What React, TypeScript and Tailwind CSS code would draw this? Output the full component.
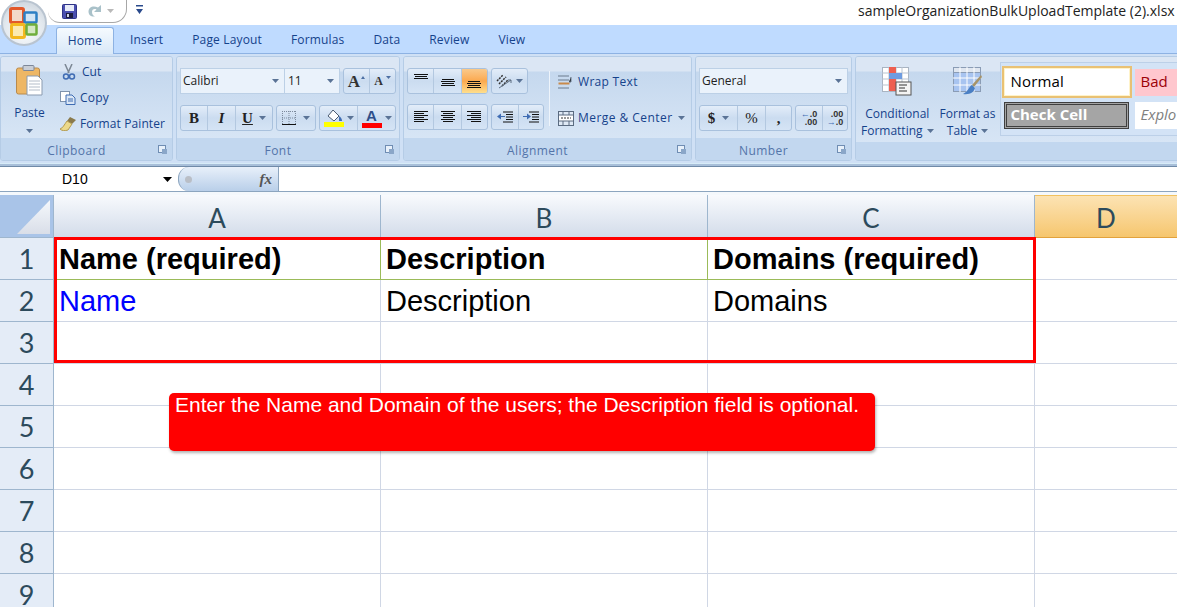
import type { ReactNode } from "react";

const ribbonFont = "font-['Open_Sans',sans-serif]";
const groupBtn =
  "flex rounded-[3px] border border-[#a9c1dd] bg-linear-to-b from-[#e3edf9] via-[#cbdcf0] to-[#d5e4f5] h-[26px]";

function Caret({ className = "" }: { className?: string }) {
  return (
    <svg width="7" height="4" viewBox="0 0 7 4" className={className}>
      <path d="M0 0h7L3.5 4z" fill="#5a7396" />
    </svg>
  );
}

function Lines({ rows }: { rows: [number, number, number][] }) {
  return (
    <svg width="16" height="14" viewBox="0 0 16 14">
      {rows.map(([x, y, w], i) => (
        <rect key={i} x={x} y={y} width={w} height="1" fill="#111" />
      ))}
    </svg>
  );
}

function Launcher() {
  return (
    <svg width="9" height="9" viewBox="0 0 9 9" className="absolute right-[5px] bottom-[6px]">
      <rect x="0.5" y="0.5" width="7" height="7" fill="#e7f0fa" stroke="#6f8db3" />
      <rect x="4" y="4" width="5" height="5" fill="#8aa6c8" />
    </svg>
  );
}

function Group({
  width,
  label,
  launcher = true,
  children,
}: {
  width: string;
  label?: string;
  launcher?: boolean;
  children: ReactNode;
}) {
  return (
    <div
      className={`${width} shrink-0 h-[105px] flex flex-col rounded-[3px] border border-[#b5cce6] overflow-hidden`}
    >
      <div className="h-[85px] flex bg-[linear-gradient(#dbe6f4_0,#dbe6f4_14px,#c5d8ee_15px,#d7e5f5_100%)]">
        {children}
      </div>
      <div className="relative flex-1 bg-[#c2d7ef] flex items-center justify-center pt-[4px] pr-[20px] text-[12px] tracking-[0.45px] text-[#5374a9]">
        {label}
        {launcher && <Launcher />}
      </div>
    </div>
  );
}

function Seg({
  w,
  last,
  active,
  children,
}: {
  w: string;
  last?: boolean;
  active?: boolean;
  children: ReactNode;
}) {
  return (
    <div
      className={`${w} flex items-center justify-center gap-[3px] ${last ? "" : "border-r border-[#b3c8e0]"} ${
        active ? "bg-linear-to-b from-[#f9c98a] via-[#fba94e] to-[#fedf8c]" : ""
      }`}
    >
      {children}
    </div>
  );
}

function OfficeOrb() {
  return (
    <div className="absolute left-[1px] top-0 w-[46px] h-[46px] rounded-full border-2 border-[#b9c4d0] bg-[radial-gradient(circle_at_50%_70%,#fafcfd_0,#e2e8ee_55%,#c3ccd6_100%)] flex items-center justify-center">
      <svg width="30" height="32" viewBox="0 0 30 32">
        <rect x="1.500" y="1.500" width="13" height="14" rx="1.500" fill="#f3d9c8" stroke="#e2582a" strokeWidth="3" />
        <rect x="15.500" y="5.500" width="12" height="10" rx="1" fill="#d2e5f5" stroke="#2c7fc4" strokeWidth="2.500" />
        <rect x="2.500" y="17.500" width="13" height="13" rx="1.500" fill="#fbeab0" stroke="#f3b81f" strokeWidth="3" />
        <rect x="17.500" y="17.500" width="10" height="10" rx="1" fill="#d5e8c3" stroke="#6fae3c" strokeWidth="2.500" />
      </svg>
    </div>
  );
}

function QuickAccess() {
  return (
    <div className="ml-[48px] w-[79px] h-[23px] rounded-br-[14px] rounded-bl-[12px] border-r border-b border-[#a7a7a7] bg-white flex items-center pl-[14px]">
      <svg width="15" height="15" viewBox="0 0 15 15">
        <rect width="14" height="14" x="0.5" y="0.5" rx="1" fill="#4a4fb0" stroke="#2f3487" />
        <rect x="3" y="1" width="9" height="6" fill="#e8ecf8" />
        <rect x="4" y="9" width="7" height="5" fill="#1d1d3f" />
        <rect x="5" y="10" width="2" height="3" fill="#cfd3e6" />
      </svg>
      <svg width="14" height="14" viewBox="0 0 14 14" className="ml-[11px]">
        <path
          d="M13 1v7H6l2.500-2.500C6 4.500 4 5.500 4 8c0 2 1 3.500 3 4.500C3 13 .500 11 .500 7.500.500 3 5.500 1 10 3.500z"
          fill="#a9c1c9"
        />
      </svg>
      <svg width="7" height="4" viewBox="0 0 7 4" className="ml-[5px]">
        <path d="M0 0h7L3.500 4z" fill="#b9b9b9" />
      </svg>
    </div>
  );
}

function ClipboardGroup() {
  return (
    <Group width="w-[173px]" label="Clipboard">
      <div className="w-[57px] flex flex-col items-center pt-[8px]">
        <svg width="27" height="31" viewBox="0 0 27 31">
          <rect x="0.500" y="3" width="23" height="26" rx="2" fill="#eeb765" stroke="#b98a4c" />
          <rect x="7" y="0.500" width="11" height="5" rx="1" fill="#c9ced6" stroke="#7c8799" />
          <path d="M11 11h11l4 4v15H11z" fill="#fff" stroke="#8b9bb0" />
          <path d="M13 16h11M13 19h11M13 22h11M13 25h11" stroke="#b4bdc9" />
        </svg>
        <span className="mt-[9px] text-[12px] leading-[16px] text-[#15428b]">Paste</span>
        <Caret className="mt-[8px]" />
      </div>
      <div className="flex flex-col pt-[5px] gap-[6px] pl-[2px] text-[12px] text-[#15428b]">
        <div className="flex items-center h-[20px]">
          <svg width="14" height="16" viewBox="0 0 14 16" className="ml-[2px]">
            <path d="M3 0l4 9M10 0 6 9" stroke="#7c8794" strokeWidth="1.500" />
            <circle cx="4" cy="12.500" r="2.500" fill="none" stroke="#3f6cb3" strokeWidth="1.500" />
            <circle cx="10" cy="12.500" r="2.500" fill="none" stroke="#3f6cb3" strokeWidth="1.500" />
          </svg>
          <span className="ml-[6px]">Cut</span>
        </div>
        <div className="flex items-center h-[20px]">
          <svg width="16" height="14" viewBox="0 0 16 14">
            <rect x="0.500" y="0.500" width="9" height="10" fill="#fff" stroke="#7f93ad" />
            <path d="M6 4h6l3 3v6.500H6z" fill="#dbe7f5" stroke="#3f6cb3" />
            <path d="M8 8h5M8 10h5" stroke="#3f6cb3" />
          </svg>
          <span className="ml-[4px] tracking-[0.2px]">Copy</span>
        </div>
        <div className="flex items-center h-[20px]">
          <svg width="16" height="14" viewBox="0 0 16 14">
            <path d="M10 0l6 3-4 4-5-3z" fill="#8a7a4c" />
            <path d="M7 4l5 3-4 6c-3 1-6 1-8-1 3-1 4-4 7-8z" fill="#ecd98a" stroke="#b39b50" />
          </svg>
          <span className="ml-[4px] tracking-[0.1px]">Format Painter</span>
        </div>
      </div>
    </Group>
  );
}

function FontGroup() {
  return (
    <Group width="w-[224px]" label="Font">
      <div className="pl-[3px] pt-[11px] flex flex-col gap-[11px]">
        <div className="flex h-[26px]">
          <div className="w-[105px] h-[26px] bg-[#eaf2fb] border border-[#bcd0e6] flex items-center justify-between pl-[2px] pr-[5px] text-[12px] text-[#222]">
            Calibri
            <Caret />
          </div>
          <div className="w-[55px] h-[26px] bg-[#eaf2fb] border border-[#bcd0e6] border-l-0 flex items-center justify-between pl-[3px] pr-[5px] text-[12px] text-[#222]">
            11
            <Caret />
          </div>
          <div className={`${groupBtn} ml-[3px] w-[53px]`}>
            <Seg w="w-[26px]">
              <span className="font-['Liberation_Serif',serif] font-bold text-[17px] text-[#333] leading-none">A</span>
              <svg width="4" height="3" viewBox="0 0 4 3" className="-mt-[8px] -ml-[2px]">
                <path d="M0 3h4L2 0z" fill="#4d6fa3" />
              </svg>
            </Seg>
            <Seg w="w-[25px]" last>
              <span className="font-['Liberation_Serif',serif] font-bold text-[12px] text-[#333] leading-none">A</span>
              <svg width="5" height="3" viewBox="0 0 5 3" className="-mt-[8px]">
                <path d="M0 0h5L2.500 3z" fill="#4d6fa3" />
              </svg>
            </Seg>
          </div>
        </div>
        <div className="flex gap-[3px]">
          <div className={`${groupBtn} w-[93px] font-['Liberation_Serif',serif] font-bold text-[15px] text-[#222]`}>
            <Seg w="w-[27px]">B</Seg>
            <Seg w="w-[28px]"><i className="font-bold">I</i></Seg>
            <Seg w="w-[36px]" last>
              <u>U</u>
              <Caret className="ml-[3px]" />
            </Seg>
          </div>
          <div className={`${groupBtn} w-[40px]`}>
            <Seg w="w-full" last>
              <svg width="14" height="14" viewBox="0 0 14 14">
                <path d="M.500 0v13M7 0v13M13.500 0v13M0 .500h14M0 7h14" stroke="#7c8a9c" strokeDasharray="1 1" />
                <path d="M0 13.500h14" stroke="#111" />
              </svg>
              <Caret className="ml-[4px]" />
            </Seg>
          </div>
          <div className={`${groupBtn} w-[77px]`}>
            <Seg w="w-[38px]">
              <svg width="20" height="18" viewBox="0 0 20 18">
                <path d="M9 1l6 6-5 5-6-5z" fill="#fff" stroke="#4a5b70" />
                <path d="M15 7c2 1 3 3 3 5h-3z" fill="#3f6cb3" />
                <rect y="13" width="20" height="5" fill="#ffff00" />
              </svg>
              <Caret />
            </Seg>
            <Seg w="w-[37px]" last>
              <div className="flex flex-col items-center">
                <span className="font-['Liberation_Sans',sans-serif] font-bold text-[15px] leading-[14px] text-[#2f4f8a]">A</span>
                <div className="w-[20px] h-[5px] bg-[#ff0000]" />
              </div>
              <Caret />
            </Seg>
          </div>
        </div>
      </div>
    </Group>
  );
}

function AlignmentGroup() {
  const top: [number, number, number][] = [[1, 0, 14], [2, 2, 12], [1, 4, 14]];
  const mid: [number, number, number][] = [[2, 5, 12], [1, 7, 14], [2, 9, 12], [1, 11, 14]];
  const bot: [number, number, number][] = [[2, 7, 12], [1, 9, 14], [2, 11, 12], [1, 13, 14]];
  const left: [number, number, number][] = [[1, 1, 14], [1, 3, 10], [1, 5, 14], [1, 7, 10], [1, 9, 14], [1, 11, 10]];
  const center: [number, number, number][] = [[1, 1, 14], [3, 3, 10], [1, 5, 14], [3, 7, 10], [1, 9, 14], [3, 11, 10]];
  const right: [number, number, number][] = [[1, 1, 14], [5, 3, 10], [1, 5, 14], [5, 7, 10], [1, 9, 14], [5, 11, 10]];
  return (
    <Group width="w-[289px]" label="Alignment">
      <div className="pl-[3px] pt-[11px] flex flex-col gap-[10px]">
        <div className="flex gap-[3px]">
          <div className={`${groupBtn} w-[81px] overflow-hidden`}>
            <Seg w="w-[27px]"><Lines rows={top} /></Seg>
            <Seg w="w-[28px]"><Lines rows={mid} /></Seg>
            <Seg w="w-[26px]" last active><Lines rows={bot} /></Seg>
          </div>
          <div className={`${groupBtn} w-[37px]`}>
            <Seg w="w-full" last>
              <svg width="17" height="15" viewBox="0 0 17 15">
                <path d="M1 7l6-6M3 10l7-7M6 12l6-6" stroke="#333" strokeWidth="1.500" strokeDasharray="2 1" />
                <path d="M3 14 15 6M15 6h-3M15 6v3" stroke="#5d6d80" fill="none" />
              </svg>
              <Caret />
            </Seg>
          </div>
        </div>
        <div className="flex gap-[3px]">
          <div className={`${groupBtn} w-[81px]`}>
            <Seg w="w-[27px]"><Lines rows={left} /></Seg>
            <Seg w="w-[28px]"><Lines rows={center} /></Seg>
            <Seg w="w-[26px]" last><Lines rows={right} /></Seg>
          </div>
          <div className={`${groupBtn} w-[53px]`}>
            <Seg w="w-[27px]">
              <svg width="16" height="14" viewBox="0 0 16 14">
                <path d="M6 2h10M9 4.500h7M9 7h7M9 9.500h7M6 12h10" stroke="#111" />
                <path d="M0 6.500 4 3.500v6z" fill="#3f6cb3" />
                <path d="M4 6.500h4" stroke="#3f6cb3" />
              </svg>
            </Seg>
            <Seg w="w-[24px]" last>
              <svg width="16" height="14" viewBox="0 0 16 14">
                <path d="M6 2h10M9 4.500h7M9 7h7M9 9.500h7M6 12h10" stroke="#111" />
                <path d="M8 6.500 4 3.500v6z" fill="#3f6cb3" />
                <path d="M0 6.500h4" stroke="#3f6cb3" />
              </svg>
            </Seg>
          </div>
        </div>
      </div>
      <div className="ml-[5px] mt-[14px] w-[1px] h-[55px] bg-[#eef4fb]" />
      <div className="pl-[8px] pt-[15px] flex flex-col gap-[16px] text-[12px] text-[#15428b]">
        <div className="flex items-center h-[20px]">
          <svg width="16" height="15" viewBox="0 0 16 15">
            <path d="M0 1h11M0 5h11" stroke="#6b7a8d" />
            <rect x="0.500" y="7.500" width="11" height="2" fill="#c98a4b" />
            <path d="M0 13h11M13 2v5h-2" stroke="#6b7a8d" />
          </svg>
          <span className="ml-[4px] tracking-[0.3px]">Wrap Text</span>
        </div>
        <div className="flex items-center h-[20px]">
          <svg width="16" height="15" viewBox="0 0 16 15">
            <rect x="0.500" y="0.500" width="15" height="14" fill="#dfe9f5" stroke="#5a6b80" />
            <rect x="1" y="4" width="14" height="6" fill="#fff" />
            <path d="M0 4h16M0 10h16M5 0v4M11 0v4M5 10v5M11 10v5" stroke="#5a6b80" />
            <path d="M3 7h10" stroke="#333" strokeDasharray="2 1" />
          </svg>
          <span className="ml-[4px] tracking-[0.45px]">Merge &amp; Center</span>
          <Caret className="ml-[5px]" />
        </div>
      </div>
    </Group>
  );
}

function NumberGroup() {
  return (
    <Group width="w-[157px]" label="Number">
      <div className="pl-[3px] pt-[11px] flex flex-col gap-[11px]">
        <div className="w-[149px] h-[26px] bg-[#eaf2fb] border border-[#bcd0e6] flex items-center justify-between pl-[2px] pr-[5px] text-[12px] text-[#222]">
          General
          <Caret />
        </div>
        <div className="flex gap-[3px]">
          <div className={`${groupBtn} w-[93px] font-['Liberation_Serif',serif] text-[15px] text-[#222]`}>
            <Seg w="w-[38px]">
              <b>$</b>
              <Caret className="ml-[4px]" />
            </Seg>
            <Seg w="w-[28px]">%</Seg>
            <Seg w="w-[25px]" last><b>,</b></Seg>
          </div>
          <div className={`${groupBtn} w-[53px] font-['Liberation_Sans',sans-serif] font-bold text-[9px] leading-[8px] text-[#333]`}>
            <Seg w="w-[27px]">
              <div className="text-right whitespace-nowrap">
                <span className="text-[#3f6cb3]">←</span>.0
                <br />
                .00
              </div>
            </Seg>
            <Seg w="w-[24px]" last>
              <div className="text-right whitespace-nowrap">
                .00
                <br />
                <span className="text-[#3f6cb3]">→</span>.0
              </div>
            </Seg>
          </div>
        </div>
      </div>
    </Group>
  );
}

function StylesGroup() {
  return (
    <Group width="w-[340px]" launcher={false}>
      <div className="w-[73px] ml-[5px] flex flex-col items-center pt-[10px] text-[12px] leading-[17px] text-[#15428b]">
        <svg width="30" height="29" viewBox="0 0 30 29">
          <rect x="0.500" y="0.500" width="26" height="24" fill="#fff" stroke="#a9b4c2" />
          <path d="M7 0v25M14 0v25M20 0v25M0 6h27M0 12h27M0 18h27" stroke="#b9c3d0" />
          <rect x="7" y="0" width="7" height="6" fill="#ee5f50" />
          <rect x="7" y="6" width="13" height="6" fill="#6f9ce0" />
          <rect x="7" y="12" width="7" height="12" fill="#ee5f50" />
          <rect x="14" y="15" width="15" height="13" fill="#f4f4f4" stroke="#555" />
          <path d="M17 18h8M17 21h6M17 24h8" stroke="#333" />
        </svg>
        <span className="mt-[9px]">Conditional</span>
        <span className="flex items-center gap-[4px] whitespace-nowrap">
          Formatting
          <Caret />
        </span>
      </div>
      <div className="w-[62px] ml-[6px] flex flex-col items-center pt-[10px] text-[12px] leading-[17px] text-[#15428b]">
        <svg width="30" height="29" viewBox="0 0 30 29">
          <rect x="0.500" y="0.500" width="27" height="24" fill="#a8c4f0" stroke="#8a9cb5" />
          <rect x="0.500" y="0.500" width="27" height="5" fill="#dfe6f0" stroke="#8a9cb5" />
          <path d="M7 0v25M14 0v25M21 0v25M0 11h28M0 18h28" stroke="#fff" />
          <path d="M28 8 19 18l2 2 8-10z" fill="#a7946a" />
          <path d="M19 18c-3 1-3 6-9 9 7 1 11-2 12-6z" fill="#4a7fc4" />
        </svg>
        <span className="mt-[9px] whitespace-nowrap">Format as</span>
        <span className="flex items-center gap-[4px]">
          Table
          <Caret />
        </span>
      </div>
      <div className="ml-[5px] mt-[5px] w-[200px] h-[74px] border border-[#bcd0e8] bg-[#d3e3f6] flex flex-col pl-[1px]">
        <div className="flex items-start mt-[3px]">
          <div className="w-[130px] h-[32px] bg-white border-2 border-[#e9c174] shadow-[inset_0_0_0_1px_#fff3c9] pl-[6px] pb-[2px] flex items-center text-[15px] tracking-[0.2px] text-black">
            Normal
          </div>
          <div className="ml-[3px] mt-[3px] w-[60px] h-[27px] bg-[#ffc7ce] pl-[5px] pb-[2px] flex items-center text-[15px] text-[#9c0006]">
            Bad
          </div>
        </div>
        <div className="flex items-start mt-[4px]">
          <div className="ml-[2px] w-[125px] h-[27px] bg-[#a5a5a5] border-[3px] border-double border-[#3f3f3f] pl-[3px] pb-[2px] flex items-center text-[15px] font-bold text-white whitespace-nowrap">
            Check Cell
          </div>
          <div className="ml-[6px] w-[60px] h-[27px] bg-white pl-[5px] pb-[2px] flex items-center text-[15px] italic text-[#7f7f7f] overflow-hidden">
            Explo
          </div>
        </div>
      </div>
    </Group>
  );
}

function Ribbon() {
  return (
    <div className={`${ribbonFont} h-[112px] bg-[#cfe0f5] overflow-hidden`}>
      <div className="h-[2px]" />
      <div className="flex gap-[3px] w-[1177px] overflow-hidden">
        <ClipboardGroup />
        <FontGroup />
        <AlignmentGroup />
        <NumberGroup />
        <StylesGroup />
      </div>
      <div className="mt-[2px] h-[1px] bg-[#d7ecf8]" />
      <div className="h-[2px] bg-[#a8bfd9]" />
    </div>
  );
}

function Tabs() {
  const tabs = ["Insert", "Page Layout", "Formulas", "Data", "Review", "View"];
  return (
    <div className={`${ribbonFont} h-[29px] bg-[#bfdbff] border-b border-[#8db2e3] flex items-end pl-[56px] text-[12px] tracking-[0.15px] text-[#15428b]`}>
      <div className="w-[58px] h-[27px] rounded-t-[3px] border border-b-0 border-[#8db2e3] bg-linear-to-b from-[#f5fafe] to-[#d9e8f8] flex items-center justify-center -mb-[1px]">
        Home
      </div>
      <div className="flex gap-[29px] pl-[16px] h-[26px] items-center">
        {tabs.map((t) => (
          <span key={t}>{t}</span>
        ))}
      </div>
    </div>
  );
}

function FormulaBar() {
  return (
    <div className="h-[26px] flex items-center bg-white border-t border-[#6f8aa8] border-b border-b-[#8ca5bf]">
      <div className="w-[178px] h-full flex items-center pl-[62px] pr-[6px] justify-between font-['Liberation_Sans',sans-serif] text-[14px] pt-[1px] text-black">
        D10
        <svg width="9" height="5" viewBox="0 0 9 5">
          <path d="M0 0h9L4.500 5z" fill="#000" />
        </svg>
      </div>
      <div className="w-[101px] h-full rounded-l-[11px] border-x border-[#8ca5bf] bg-linear-to-b from-[#e8f0fa] to-[#b9cfe9] flex items-center justify-between pl-[6px] pr-[6px]">
        <div className="w-[7px] h-[7px] rounded-full bg-[#b9bec6]" />
        <span className="font-['Liberation_Serif',serif] italic font-bold text-[15px] text-[#555]">fx</span>
      </div>
    </div>
  );
}

const rows: { a?: string; b?: string; c?: string; head?: boolean; blue?: boolean }[] = [
  { a: "Name (required)", b: "Description", c: "Domains (required)", head: true },
  { a: "Name", b: "Description", c: "Domains", blue: true },
  {},
  {},
  {},
  {},
  {},
  {},
  {},
];

function Sheet() {
  return (
    <div className="relative font-['Liberation_Sans',sans-serif]">
      <div className="flex h-[43px] font-['Lato',sans-serif] text-[26px] text-[#2c4a5c]">
        <div className="w-[54px] h-full bg-[#a9c4e8] border-r border-b border-[#9eb6ce] flex items-end justify-end p-[3px]">
          <svg width="33" height="34" viewBox="0 0 33 34">
            <defs>
              <linearGradient id="corner" x1="0" y1="0" x2="0" y2="1">
                <stop offset="0" stopColor="#f5f8fc" />
                <stop offset="1" stopColor="#d9dee8" />
              </linearGradient>
            </defs>
            <path d="M33 0v34H0z" fill="url(#corner)" />
          </svg>
        </div>
        {["A", "B", "C"].map((c) => (
          <div
            key={c}
            className="w-[327px] border-r border-b border-[#9eb6ce] bg-linear-to-b from-[#f8fafd] to-[#d3dcea] flex items-center justify-center pt-[4px]"
          >
            {c}
          </div>
        ))}
        <div className="flex-1 border-b border-[#e2a23c] border-t border-t-[#f1c15f] bg-linear-to-b from-[#fce3b3] to-[#f6c66d] flex items-center justify-center pt-[3px]">
          D
        </div>
      </div>
      {rows.map((r, i) => (
        <div key={i} className="flex h-[42px]">
          <div className="w-[54px] bg-[#e4ecf7] border-r border-b border-[#9eb6ce] flex items-center justify-center pt-[2px] font-['Lato',sans-serif] text-[27px] text-[#2c4a5c]">
            {i + 1}
          </div>
          {[r.a, r.b, r.c].map((v, j) => (
            <div
              key={j}
              className={`w-[327px] border-r border-b pl-[5px] pt-[2px] flex items-center text-[29px] whitespace-nowrap ${
                r.head ? "font-bold border-[#9bbb59]" : "border-[#d0d7e5]"
              } ${r.blue && j === 0 ? "text-[#0000ff]" : "text-black"}`}
            >
              {v}
            </div>
          ))}
          <div className="flex-1 border-b border-[#d0d7e5]" />
        </div>
      ))}
      <div className="absolute left-[54px] top-[42px] w-[982px] h-[126px] border-[3px] border-[#ff0000]" />
      <div className="absolute left-[169px] top-[198px] w-[706px] h-[58px] rounded-[5px] bg-[#ff0000] shadow-[1px_2px_3px_rgba(0,0,0,0.3)] pl-[6px] text-[21px] leading-[24px] text-white whitespace-nowrap">
        Enter the Name and Domain of the users; the Description field is optional.
      </div>
    </div>
  );
}

export default function App() {
  return (
    <div className="relative w-[1177px] h-[607px] overflow-hidden bg-white">
      <OfficeOrb />
      <div className="h-[25px] flex justify-between">
        <QuickAccess />
        <svg width="7" height="11" viewBox="0 0 7 11" className="absolute left-[136px] top-[5px]">
          <path d="M0 0h7v1.500H0zM0 4h7L3.500 9z" fill="#2a4a8c" />
        </svg>
        <div className={`${ribbonFont} absolute left-[858px] top-[1px] text-[14px] leading-[20px] text-[#222] whitespace-nowrap`}>
          sampleOrganizationBulkUploadTemplate (2).xlsx
        </div>
      </div>
      <Tabs />
      <Ribbon />
      <FormulaBar />
      <div className="h-[3px] bg-[#f4f8fc]" />
      <Sheet />
    </div>
  );
}
